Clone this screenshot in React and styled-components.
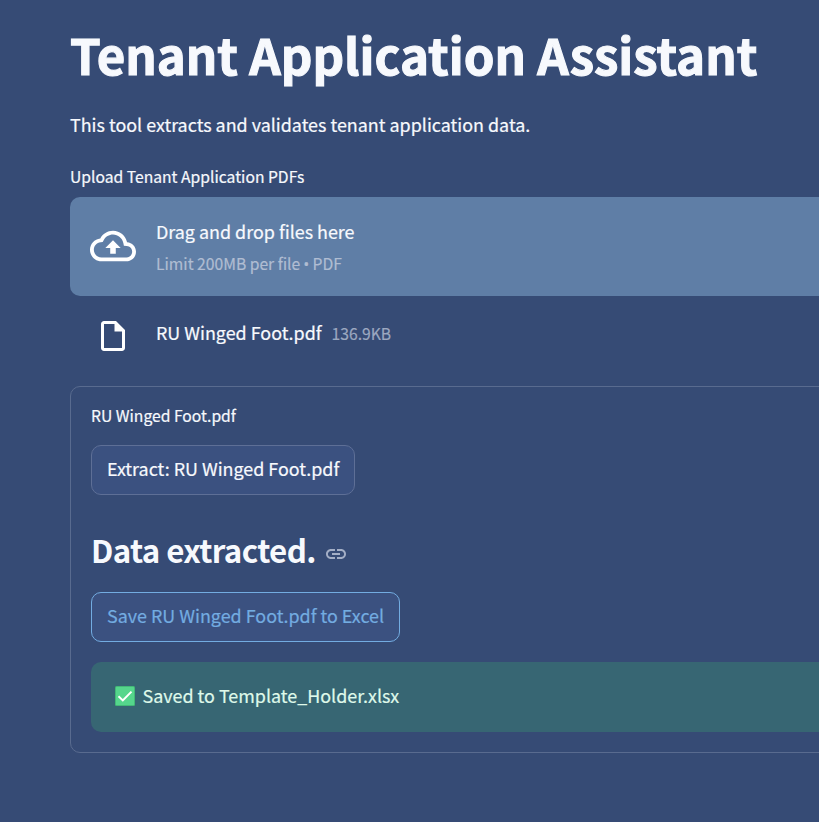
import React from "react";
import styled, { createGlobalStyle } from "styled-components";

const Global = createGlobalStyle`
  * { box-sizing: border-box; }
  html, body { margin: 0; background: #364b75; overflow: hidden; }
  body {
    font-family: "Source Sans Pro", "Noto Sans CJK SC", sans-serif;
    font-size: 17.9px;
    line-height: 32px;
    color: #f7f9fd;
  }
`;

const Page = styled.main`
  height: 822px;
  padding: 21px 0 0 70px;
  display: flex;
  flex-direction: column;
  overflow: hidden;
  background: #364b75;
`;

const Text = styled.span`
  display: block;
  white-space: nowrap;
  font-size: ${(p) => p.$size || 17.92}px;
  line-height: ${(p) => p.$line || 32}px;
  color: ${(p) => p.$color || "inherit"};
  -webkit-text-stroke: 0.2px currentColor;
`;

const Bullet = styled.span`
  font-family: "Open Sans", sans-serif;
  font-size: 16px;
  line-height: 1;
  margin: 0 -0.4px;
`;

const Title = styled.h1`
  margin: 0 0 21px;
  font-size: 49.2px;
  line-height: 66px;
  font-weight: 700;
  white-space: nowrap;
  -webkit-text-stroke: 1.1px currentColor;
`;

const Intro = styled.p`
  margin: 0 0 23px;
  height: 32px;
`;

const Field = styled.label`
  height: 34px;
`;

const Dropzone = styled.section`
  width: 900px;
  height: 99px;
  padding: 0 20px;
  display: flex;
  align-items: center;
  gap: 20px;
  border-radius: 10px;
  background: #5f7ea6;
`;

const DropIcon = styled.span`
  height: 48px;
  width: 46px;
  flex-shrink: 0;
`;

const DropText = styled.div`
  display: flex;
  flex-direction: column;
  gap: 1px;
  padding-top: 1px;
`;

const FileRow = styled.div`
  height: 90px;
  padding: 0 20px 10px;
  display: flex;
  align-items: center;
  gap: 20px;
`;

const IconSlot = styled.span`
  width: 46px;
  height: 46px;
  display: flex;
  align-items: center;
  justify-content: center;
  flex-shrink: 0;
`;

const FileName = styled.div`
  display: flex;
  gap: 10px;
  padding-bottom: 7px;
`;

const FileSize = styled.div`
  padding-top: 2px;
`;

const Card = styled.section`
  width: 900px;
  height: 367px;
  padding: 13px 20px 0;
  border: 1px solid #596b8f;
  border-radius: 10px;
  display: flex;
  flex-direction: column;
  align-items: flex-start;
`;

const Button = styled.button`
  height: 50px;
  margin: ${(p) => (p.$active ? "0" : "13px 0 0")};
  padding: 0 15px 5px;
  width: ${(p) => p.$width}px;
  border: 1px solid ${(p) => (p.$active ? "#73ace1" : "#5e6f96")};
  border-radius: 10px;
  background: #3b5180;
  color: ${(p) => (p.$active ? "#73ace1" : "#f7f9fd")};
  font-family: inherit;
  text-align: left;
`;

const Heading = styled.h2`
  height: 97px;
  margin: 0;
  padding: 13px 0 0;
  display: flex;
  align-items: center;
  gap: 8.6px;
  font-size: 31.3px;
  line-height: 42px;
  font-weight: 700;
  letter-spacing: -0.63px;
  white-space: nowrap;
`;

const Anchor = styled.span`
  height: 24px;
  display: flex;
  margin-top: 7px;
`;

const Alert = styled.div`
  width: 850px;
  height: 70px;
  margin-top: 20px;
  padding: 0 24px 3px;
  display: flex;
  align-items: center;
  gap: 7.5px;
  border-radius: 10px;
  background: #376673;
  color: #dff9ea;
`;

const AlertText = styled.div`
  padding-bottom: 2px;
`;

const CloudIcon = () => (
  <svg width="46" height="46" viewBox="0 0 24 24" fill="#fff">
    <path d="M19.35 10.04C18.67 6.59 15.64 4 12 4 9.11 4 6.6 5.64 5.35 8.04 2.34 8.36 0 10.91 0 14c0 3.31 2.69 6 6 6h13c2.76 0 5-2.24 5-5 0-2.64-2.05-4.78-4.65-4.96zM19 18H6c-2.21 0-4-1.79-4-4 0-2.05 1.53-3.76 3.56-3.97l1.07-.11.5-.95C8.08 7.14 9.94 6 12 6c2.62 0 4.88 1.86 5.39 4.43l.3 1.5 1.53.11c1.56.1 2.78 1.41 2.78 2.96 0 1.65-1.35 3-3 3zM8 13h2.55v3h2.9v-3H16l-4-4z" />
  </svg>
);

const FileIcon = () => (
  <svg width="36" height="36" viewBox="0 0 24 24" fill="#fff">
    <path d="M14 2H6c-1.1 0-1.99.9-1.99 2L4 20c0 1.1.89 2 1.99 2H18c1.1 0 2-.9 2-2V8l-6-6zM6 20V4h7v5h5v11H6z" />
  </svg>
);

const LinkIcon = () => (
  <svg width="24" height="24" viewBox="0 0 24 24" fill="#a4afc6">
    <path d="M3.9 12c0-1.71 1.39-3.1 3.1-3.1h4V7H7c-2.76 0-5 2.24-5 5s2.24 5 5 5h4v-1.9H7c-1.71 0-3.1-1.39-3.1-3.1zM8 13h8v-2H8v2zm9-6h-4v1.9h4c1.71 0 3.1 1.39 3.1 3.1s-1.39 3.1-3.1 3.1h-4V17h4c2.76 0 5-2.24 5-5s-2.24-5-5-5z" />
  </svg>
);

const CheckIcon = () => (
  <svg width="20" height="20" viewBox="0 0 20 20">
    <rect width="20" height="20" rx="1.5" fill="#43b977" />
    <rect x="1" y="1" width="18" height="18" rx="0.5" fill="#55d68c" />
    <path d="M3.5 10.3 7.8 14.4 16.5 5.6" fill="none" stroke="#fff" strokeWidth="2" />
  </svg>
);

export default function App() {
  return (
    <Page>
      <Global />
      <Title>Tenant Application Assistant</Title>
      <Intro><Text>This tool extracts and validates tenant application data.</Text></Intro>
      <Field><Text $size={15.68} $line={28}>Upload Tenant Application PDFs</Text></Field>
      <Dropzone>
        <DropIcon><CloudIcon /></DropIcon>
        <DropText>
          <Text>Drag and drop files here</Text>
          <Text $size={15.68} $color="#b0bdd2">Limit 200MB per file <Bullet>•</Bullet> PDF</Text>
        </DropText>
      </Dropzone>
      <FileRow>
        <IconSlot><FileIcon /></IconSlot>
        <FileName>
          <Text>RU Winged Foot.pdf</Text>
          <FileSize><Text $size={15.68} $color="#9ca8c0">136.9KB</Text></FileSize>
        </FileName>
      </FileRow>
      <Card>
        <Text $size={15.68}>RU Winged Foot.pdf</Text>
        <Button $width={264}><Text>Extract: RU Winged Foot.pdf</Text></Button>
        <Heading>Data extracted. <Anchor><LinkIcon /></Anchor></Heading>
        <Button $active $width={309}><Text>Save RU Winged Foot.pdf to Excel</Text></Button>
        <Alert>
          <CheckIcon />
          <AlertText><Text>Saved to Template_Holder.xlsx</Text></AlertText>
        </Alert>
      </Card>
    </Page>
  );
}
